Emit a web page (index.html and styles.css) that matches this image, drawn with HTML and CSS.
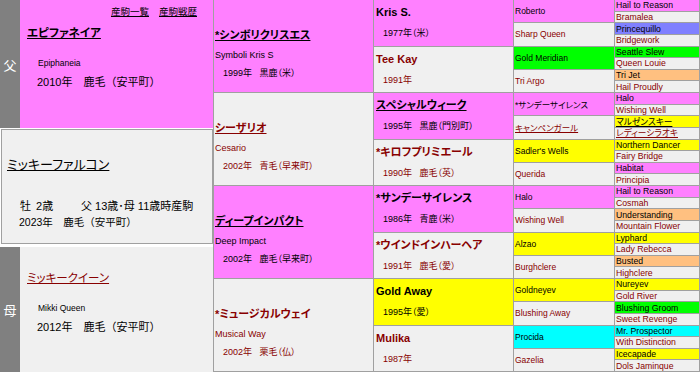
FILE: index.html
```html
<!DOCTYPE html>
<html lang="ja">
<head>
<meta charset="utf-8">
<title>ミッキーファルコン 血統表</title>
<link rel="stylesheet" href="styles.css">
</head>
<body>
<div class="page">
  <div class="left">
    <div class="parent sire">
      <div class="strip">父</div>
      <div class="pinfo m">
        <div class="links"><a href="#">産駒一覧</a><a href="#">産駒戦歴</a></div>
        <a class="pname bold" href="#">エピファネイア</a>
        <div class="pen">Epiphaneia</div>
        <div class="pyr">2010年　鹿毛（安平町）</div>
      </div>
    </div>
    <div class="self">
      <a class="sname" href="#">ミッキーファルコン</a>
      <div class="sline"><span class="sex">牡 2歳</span><span>父 13歳･母 11歳時産駒</span></div>
      <div class="syr">2023年　鹿毛（安平町）</div>
    </div>
    <div class="parent dam">
      <div class="strip">母</div>
      <div class="pinfo g">
        <a class="pname f" href="#">ミッキークイーン</a>
        <div class="pen">Mikki Queen</div>
        <div class="pyr">2012年　鹿毛（安平町）</div>
      </div>
    </div>
  </div>

  <div class="tree">
    <!-- generation 2 -->
    <div class="c2 m"><a class="nm" href="#">*シンボリクリスエス</a><div class="en">Symboli Kris S</div><div class="yr">1999年 黒鹿（米）</div></div>
    <div class="c2 g f"><a class="nm" href="#">シーザリオ</a><div class="en">Cesario</div><div class="yr">2002年 青毛（早来町）</div></div>
    <div class="c2 m"><a class="nm" href="#">ディープインパクト</a><div class="en">Deep Impact</div><div class="yr">2002年 鹿毛（早来町）</div></div>
    <div class="c2 g f"><span class="nm">*ミュージカルウェイ</span><div class="en">Musical Way</div><div class="yr">2002年 栗毛（仏）</div></div>

    <!-- generation 3 -->
    <div class="c3 m"><span class="nm">Kris S.</span><div class="yr">1977年（米）</div></div>
    <div class="c3 g f"><span class="nm">Tee Kay</span><div class="yr">1991年</div></div>
    <div class="c3 m"><a class="nm" href="#">スペシャルウィーク</a><div class="yr">1995年 黒鹿（門別町）</div></div>
    <div class="c3 g f"><span class="nm">*キロフプリミエール</span><div class="yr">1990年 鹿毛（英）</div></div>
    <div class="c3 m"><span class="nm">*サンデーサイレンス</span><div class="yr">1986年 青鹿（米）</div></div>
    <div class="c3 g f"><span class="nm">*ウインドインハーヘア</span><div class="yr">1991年 鹿毛（愛）</div></div>
    <div class="c3 y"><span class="nm">Gold Away</span><div class="yr">1995年（愛）</div></div>
    <div class="c3 g f"><span class="nm">Mulika</span><div class="yr">1987年</div></div>

    <!-- generation 4 -->
    <div class="c4 m">Roberto</div>
    <div class="c4 g f">Sharp Queen</div>
    <div class="c4 gr">Gold Meridian</div>
    <div class="c4 g f">Tri Argo</div>
    <div class="c4 m">*サンデーサイレンス</div>
    <div class="c4 g f"><a href="#">キャンペンガール</a></div>
    <div class="c4 y">Sadler's Wells</div>
    <div class="c4 g f">Querida</div>
    <div class="c4 m">Halo</div>
    <div class="c4 g f">Wishing Well</div>
    <div class="c4 y">Alzao</div>
    <div class="c4 g f">Burghclere</div>
    <div class="c4 y">Goldneyev</div>
    <div class="c4 g f">Blushing Away</div>
    <div class="c4 c">Procida</div>
    <div class="c4 g f">Gazelia</div>

    <!-- generation 5 -->
    <div class="c5 m">Hail to Reason</div>
    <div class="c5 g f">Bramalea</div>
    <div class="c5 b">Princequillo</div>
    <div class="c5 g f">Bridgework</div>
    <div class="c5 gr">Seattle Slew</div>
    <div class="c5 g f">Queen Louie</div>
    <div class="c5 o">Tri Jet</div>
    <div class="c5 g f">Hail Proudly</div>
    <div class="c5 m">Halo</div>
    <div class="c5 g f">Wishing Well</div>
    <div class="c5 y"><a href="#">マルゼンスキー</a></div>
    <div class="c5 g f"><a href="#">レディーシラオキ</a></div>
    <div class="c5 y">Northern Dancer</div>
    <div class="c5 g f">Fairy Bridge</div>
    <div class="c5 m">Habitat</div>
    <div class="c5 g f">Principia</div>
    <div class="c5 m">Hail to Reason</div>
    <div class="c5 g f">Cosmah</div>
    <div class="c5 o">Understanding</div>
    <div class="c5 g f">Mountain Flower</div>
    <div class="c5 y">Lyphard</div>
    <div class="c5 g f">Lady Rebecca</div>
    <div class="c5 o">Busted</div>
    <div class="c5 g f">Highclere</div>
    <div class="c5 y">Nureyev</div>
    <div class="c5 g f">Gold River</div>
    <div class="c5 gr">Blushing Groom</div>
    <div class="c5 g f">Sweet Revenge</div>
    <div class="c5 c">Mr. Prospector</div>
    <div class="c5 g f">With Distinction</div>
    <div class="c5 y">Icecapade</div>
    <div class="c5 g f">Dols Jaminque</div>
  </div>
</div>
</body>
</html>
```

FILE: styles.css
```css
* { box-sizing: border-box; }

body {
  margin: 0;
  background: #fff;
  color: #000;
  font-family: "Liberation Sans", "Noto Sans CJK JP", sans-serif;
  font-feature-settings: "palt";
}

a { color: inherit; text-decoration: underline; }

.page {
  display: flex;
  width: 700px;
  height: 372px;
  overflow: hidden;
}

/* colours */
.m  { background: #ff80ff; }
.g  { background: #f0f0f0; }
.y  { background: #ffff00; }
.gr { background: #00ff00; }
.o  { background: #ffc080; }
.b  { background: #8080ff; }
.c  { background: #00ffff; }
.f  { color: #880000; }

/* left column */
.left {
  width: 213px;
  display: flex;
  flex-direction: column;
}

.parent { display: flex; }
.sire { height: 128px; }
.dam  { height: 125px; margin-top: 3px; }

.strip {
  width: 20px;
  background: #808080;
  color: #fff;
  font-size: 13px;
  display: flex;
  align-items: center;
  justify-content: center;
}

.pinfo { flex: 1; padding-left: 7px; }
.sire .pinfo { padding-top: 5px; }
.dam .pinfo { padding-top: 23px; }

.links {
  display: flex;
  justify-content: flex-end;
  gap: 10px;
  padding-right: 16px;
  font-size: 9.5px;
  line-height: 14px;
}

.pname {
  display: block;
  width: fit-content;
  font-size: 11.5px;
  line-height: 16px;
}
.sire .pname { margin-top: 6px; }
.bold { font-weight: bold; }

.pen {
  font-size: 8.5px;
  line-height: 12px;
  margin: 16px 0 0 11px;
}
.pyr {
  font-size: 11px;
  line-height: 14px;
  margin: 6px 0 0 10px;
  font-feature-settings: normal;
}

.self {
  margin: 1px 0 0 1px;
  width: 212px;
  height: 115px;
  border: 1px solid #a0a0a0;
  background: #f0f0f0;
  padding: 26px 0 0 5px;
}
.sname {
  display: block;
  width: fit-content;
  font-size: 13px;
  line-height: 18px;
}
.sline {
  display: flex;
  font-size: 11px;
  line-height: 14px;
  margin: 25px 0 0 13px;
}
.sex { width: 61px; word-spacing: 2px; }
.syr {
  font-size: 10.5px;
  line-height: 14px;
  margin: 2px 0 0 12px;
  font-feature-settings: normal;
}

/* pedigree tree */
.tree {
  width: 487px;
  height: 372px;
  display: grid;
  grid-template-columns: 159px 139px 100px 84px;
  grid-template-rows: repeat(32, 1fr);
  grid-auto-flow: column;
  gap: 1px;
  background: #a0a0a0;
  border: 1px solid #a0a0a0;
  border-top: 0;
}
.tree > div { overflow: hidden; white-space: nowrap; }

.c2 { grid-row: span 8; padding: 28px 0 0 1px; }
.c2 .nm {
  display: block;
  width: fit-content;
  font-size: 11px;
  font-weight: bold;
  line-height: 14px;
}
.c2 .en { font-size: 9px; line-height: 12px; margin-top: 7px; }
.c2 .yr { font-size: 9px; line-height: 12px; margin-top: 6px; padding-left: 8px; word-spacing: 5px; }

.c3 { grid-row: span 4; padding: 5px 0 0 2px; }
.c3 .nm {
  display: block;
  width: fit-content;
  font-size: 11px;
  font-weight: bold;
  line-height: 14px;
}
.c3 .yr { font-size: 9px; line-height: 12px; margin-top: 8px; padding-left: 7px; word-spacing: 5px; }

.c4 {
  grid-row: span 2;
  display: flex;
  align-items: center;
  padding-left: 1px;
  font-size: 8.5px;
}
.c5 {
  display: flex;
  align-items: center;
  padding-left: 1px;
  font-size: 8.7px;
  line-height: 10px;
}
```
